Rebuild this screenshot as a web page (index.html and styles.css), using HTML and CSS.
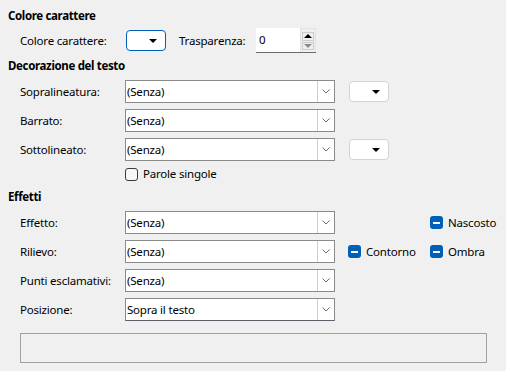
FILE: index.html
```html
<!DOCTYPE html>
<html lang="it">
  <head>
    <meta charset="UTF-8" />
    <meta name="viewport" content="width=device-width, initial-scale=1.0" />
    <title>Effetti carattere</title>
    <link rel="stylesheet" href="styles.css">
  </head>

  <body>
    <div class="page">
      <h2 class="heading">Colore carattere</h2>
      <div class="row row-color">
        <span class="label">Colore carattere:</span>
        <button class="color-btn focused"><span class="tri"></span></button>
        <span class="label label-alpha">Trasparenza:</span>
        <div class="spin">
          <span class="spin-value">0</span>
          <div class="spin-btns">
            <span class="spin-up"></span>
            <span class="spin-down"></span>
          </div>
        </div>
      </div>

      <h2 class="heading heading-decor">Decorazione del testo</h2>
      <div class="rows">
        <div class="row">
          <span class="label">Sopralineatura:</span>
          <div class="combo"><span class="combo-text">(Senza)</span><span class="combo-btn"><svg width="8" height="5" viewBox="0 0 8 5"><polyline points="0.5,0.5 4,4 7.5,0.5" /></svg></span></div>
          <button class="color-btn side"><span class="tri"></span></button>
        </div>
        <div class="row">
          <span class="label">Barrato:</span>
          <div class="combo"><span class="combo-text">(Senza)</span><span class="combo-btn"><svg width="8" height="5" viewBox="0 0 8 5"><polyline points="0.5,0.5 4,4 7.5,0.5" /></svg></span></div>
        </div>
        <div class="row">
          <span class="label">Sottolineato:</span>
          <div class="combo"><span class="combo-text">(Senza)</span><span class="combo-btn"><svg width="8" height="5" viewBox="0 0 8 5"><polyline points="0.5,0.5 4,4 7.5,0.5" /></svg></span></div>
          <button class="color-btn side"><span class="tri"></span></button>
        </div>
        <label class="check-row">
          <span class="check"></span>
          <span>Parole singole</span>
        </label>
      </div>

      <h2 class="heading heading-fx">Effetti</h2>
      <div class="rows">
        <div class="row">
          <span class="label">Effetto:</span>
          <div class="combo"><span class="combo-text">(Senza)</span><span class="combo-btn"><svg width="8" height="5" viewBox="0 0 8 5"><polyline points="0.5,0.5 4,4 7.5,0.5" /></svg></span></div>
          <div class="extras">
            <span></span>
            <span class="tri-check"><span class="box"></span>Nascosto</span>
          </div>
        </div>
        <div class="row">
          <span class="label">Rilievo:</span>
          <div class="combo"><span class="combo-text">(Senza)</span><span class="combo-btn"><svg width="8" height="5" viewBox="0 0 8 5"><polyline points="0.5,0.5 4,4 7.5,0.5" /></svg></span></div>
          <div class="extras">
            <span class="tri-check"><span class="box"></span>Contorno</span>
            <span class="tri-check"><span class="box"></span>Ombra</span>
          </div>
        </div>
        <div class="row">
          <span class="label">Punti esclamativi:</span>
          <div class="combo"><span class="combo-text">(Senza)</span><span class="combo-btn"><svg width="8" height="5" viewBox="0 0 8 5"><polyline points="0.5,0.5 4,4 7.5,0.5" /></svg></span></div>
        </div>
        <div class="row">
          <span class="label">Posizione:</span>
          <div class="combo combo-active"><span class="combo-text">Sopra il testo</span><span class="combo-btn"><svg width="8" height="5" viewBox="0 0 8 5"><polyline points="0.5,0.5 4,4 7.5,0.5" /></svg></span></div>
        </div>
      </div>

      <div class="preview"></div>
    </div>
  </body>
</html>
```

FILE: styles.css
```css
* {
  margin: 0;
  padding: 0;
  box-sizing: border-box;
}

body {
  background: #f0f0f0;
  color: #000000;
  font-family: "Noto Sans", "Open Sans", sans-serif;
  font-size: 11.5px;
  letter-spacing: -0.2px;
  line-height: 16px;
}

.page {
  padding: 8px 8px 0 8px;
  display: flex;
  flex-direction: column;
}

.heading {
  font-size: 11.5px;
  font-weight: bold;
  letter-spacing: -0.35px;
  line-height: 16px;
}

.heading-decor {
  margin-top: 5px;
}

.heading-fx {
  margin-top: 8px;
}

.row {
  display: flex;
  align-items: center;
  height: 23px;
  padding-left: 12px;
}

.rows {
  display: flex;
  flex-direction: column;
  gap: 6px;
  margin-top: 6px;
}

.row-color {
  height: 25px;
  margin-top: 4px;
}

.label {
  width: 105px;
  flex-shrink: 0;
}

.label-alpha {
  width: 77px;
  margin-left: 13px;
}

/* Colour picker button */
.color-btn {
  width: 40px;
  height: 21px;
  background: #ffffff;
  border: 1px solid #d4d4d4;
  border-radius: 4px;
  display: flex;
  align-items: center;
  justify-content: flex-end;
  padding-right: 8px;
}

.color-btn.focused {
  margin-left: 1px;
  border-color: #005fb8;
}

.color-btn.side {
  margin-left: 14px;
}

.tri {
  width: 0;
  height: 0;
  border-left: 4px solid transparent;
  border-right: 4px solid transparent;
  border-top: 4px solid #000000;
}

/* Spin field */
.spin {
  width: 60px;
  height: 25px;
  background: #ffffff;
  border-bottom: 1px solid #6b6b6b;
  display: flex;
}

.spin-value {
  flex: 1;
  padding-left: 3px;
  line-height: 24px;
}

.spin-btns {
  width: 16px;
  background: #f0f0f0;
  border: 1px solid #e2e2e2;
  border-bottom: none;
  padding: 3px 1px 2px 1px;
  display: flex;
  flex-direction: column;
  gap: 1px;
}

.spin-up,
.spin-down {
  flex: 1;
  border: 1px solid #cccccc;
  display: flex;
  align-items: center;
  justify-content: center;
}

.spin-up::before {
  content: "";
  border-left: 4px solid transparent;
  border-right: 4px solid transparent;
  border-bottom: 4px solid #000000;
}

.spin-down::before {
  content: "";
  border-left: 4px solid transparent;
  border-right: 4px solid transparent;
  border-top: 4px solid #8a8a8a;
}

/* Combo box */
.combo {
  width: 210px;
  height: 23px;
  background: #ffffff;
  border: 1px solid #8a8a8a;
  display: flex;
}

.combo-active {
  border-bottom-color: #5c6068;
}

.combo-text {
  flex: 1;
  padding-left: 1px;
  line-height: 21px;
}

.combo-btn {
  width: 17px;
  border-left: 1px solid #cfcfcf;
  display: flex;
  align-items: center;
  justify-content: center;
}

.combo-btn polyline {
  fill: none;
  stroke: #6b6b6b;
  stroke-width: 1;
}

/* Checkboxes */
.check-row {
  display: flex;
  align-items: center;
  gap: 5px;
  margin-left: 117px;
  height: 14px;
}

.check {
  width: 13px;
  height: 13px;
  border: 1px solid #3a3a3a;
  border-radius: 3px;
  background: #f6f6f6;
}

.extras {
  display: grid;
  grid-template-columns: 82px auto;
  margin-left: 13px;
}

.tri-check {
  display: flex;
  align-items: center;
  gap: 5px;
}

.tri-check .box {
  width: 13px;
  height: 13px;
  border-radius: 3px;
  background: #005fb8;
  display: flex;
  align-items: center;
  justify-content: center;
}

.tri-check .box::before {
  content: "";
  width: 7px;
  height: 2px;
  background: #ffffff;
}

/* Preview area */
.preview {
  margin: 12px 0 0 12px;
  width: 467px;
  height: 30px;
  border: 1px solid #a0a0a0;
}
```
